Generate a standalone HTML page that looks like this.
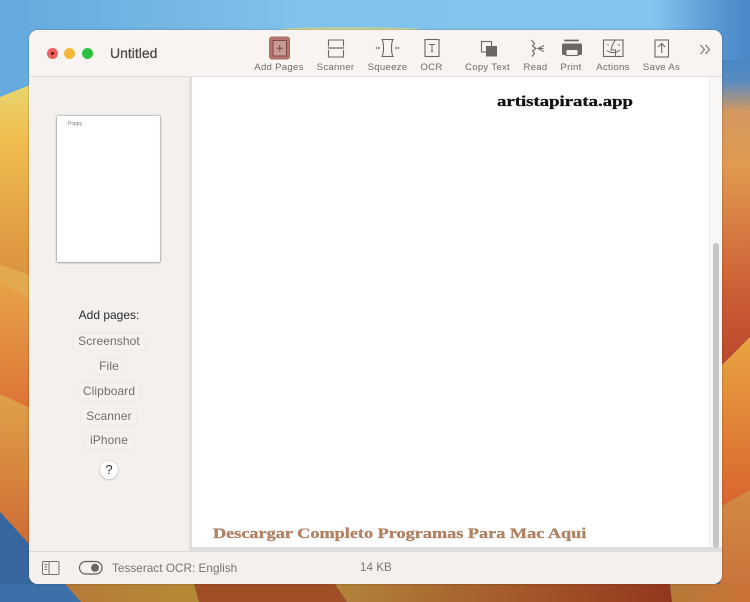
<!DOCTYPE html>
<html>
<head>
<meta charset="utf-8">
<style>
html,body{margin:0;padding:0;width:750px;height:602px;overflow:hidden;background:#5a9ad5}
body{position:relative;font-family:"Liberation Sans",sans-serif}
#bg{position:absolute;left:0;top:0}
.win{position:absolute;left:29px;top:30px;width:693px;height:554px;border-radius:9px;background:#f3f0ed;overflow:hidden;box-shadow:0 0 2px rgba(60,40,30,.4)}
.abs{position:absolute}
.tb{position:absolute;left:0;top:0;width:693px;height:46px;background:#f9f4f1;border-bottom:1px solid #e2dedb}
.lb{position:absolute;top:62px;font-size:9.6px;letter-spacing:.28px;color:#6e6b69;white-space:nowrap;transform:translateX(-50%);line-height:11px}
.t{position:absolute;white-space:nowrap}
.btn{position:absolute;left:50%;transform:translateX(-50%);white-space:nowrap;font-size:12px;letter-spacing:.1px;color:#716e6c;background:#f4f1ef;border:1px solid #eeebe8;border-radius:4px;padding:0 5px;height:16px;line-height:15px}
.ser{font-family:'Liberation Serif',serif;font-weight:bold;transform-origin:0 50%}
</style>
</head>
<body>
<svg id="bg" width="750" height="602" viewBox="0 0 750 602">
<defs>
<linearGradient id="sky" x1="0" y1="0" x2="1" y2="0"><stop offset="0" stop-color="#64a9df"/><stop offset=".4" stop-color="#80c2ea"/><stop offset=".87" stop-color="#82c5ef"/><stop offset=".97" stop-color="#5391cf"/><stop offset="1" stop-color="#4a87c6"/></linearGradient>
<linearGradient id="l1" x1="0" y1="0" x2="0" y2="1"><stop offset="0" stop-color="#e8d76e"/><stop offset=".25" stop-color="#f0bd50"/><stop offset="1" stop-color="#d98a3c"/></linearGradient>
<linearGradient id="l2" x1="0" y1="0" x2="0" y2="1"><stop offset="0" stop-color="#e8a448"/><stop offset="1" stop-color="#dc7034"/></linearGradient>
<linearGradient id="l3" x1="0" y1="0" x2="0" y2="1"><stop offset="0" stop-color="#dfa148"/><stop offset="1" stop-color="#cf6c36"/></linearGradient>
<linearGradient id="r1" gradientUnits="userSpaceOnUse" x1="0" y1="60" x2="0" y2="367"><stop offset="0" stop-color="#4a87c6"/><stop offset=".07" stop-color="#5a8cc0"/><stop offset=".17" stop-color="#d5985f"/><stop offset=".35" stop-color="#e09a50"/><stop offset=".72" stop-color="#cf6238"/><stop offset="1" stop-color="#b9472a"/></linearGradient>
<linearGradient id="r2" x1="0" y1="0" x2="0" y2="1"><stop offset="0" stop-color="#e9a442"/><stop offset="1" stop-color="#d9642e"/></linearGradient>
<linearGradient id="r3" x1="0" y1="0" x2="0" y2="1"><stop offset="0" stop-color="#d28a44"/><stop offset="1" stop-color="#c8703a"/></linearGradient>
<linearGradient id="b1" x1="0" y1="0" x2="1" y2="0"><stop offset="0" stop-color="#b57a38"/><stop offset="1" stop-color="#b58a36"/></linearGradient>
<linearGradient id="b2" x1="0" y1="0" x2="1" y2="0"><stop offset="0" stop-color="#b2833a"/><stop offset=".6" stop-color="#a35428"/><stop offset="1" stop-color="#91371f"/></linearGradient>
<linearGradient id="b3" x1="0" y1="0" x2="1" y2="0"><stop offset="0" stop-color="#b57a38"/><stop offset="1" stop-color="#cc7238"/></linearGradient>
</defs>
<rect width="750" height="602" fill="#3f6fa8"/>
<rect width="750" height="100" fill="url(#sky)"/>
<polygon points="0,97 30,85 30,300 0,265" fill="url(#l1)"/>
<polygon points="0,265 30,275 30,300 0,285" fill="#e3a94f"/>
<polygon points="0,280 30,300 30,418 0,394" fill="url(#l2)"/>
<polygon points="0,394 30,408 30,545 0,512" fill="url(#l3)"/>
<polygon points="0,512 30,545 60,602 0,602" fill="#38679f"/>
<polygon points="720,60 750,60 750,337 720,367" fill="url(#r1)"/>
<polygon points="720,367 750,337 750,490 720,507" fill="url(#r2)"/>
<polygon points="720,507 750,490 750,602 720,602" fill="url(#r3)"/>
<polygon points="0,584 65,584 81,602 0,602" fill="#3d70aa"/>
<polygon points="65,584 194,584 199,602 81,602" fill="url(#b1)"/>
<polygon points="194,584 335,584 347,602 199,602" fill="#a04e26"/>
<polygon points="335,584 670,584 672,602 347,602" fill="url(#b2)"/>
<polygon points="670,584 750,584 750,602 672,602" fill="url(#b3)"/>
<ellipse cx="350" cy="29" rx="70" ry="1.6" fill="#c8d59a"/>
</svg>

<div class="win">
  <div class="tb"></div>
  <div class="abs" style="left:0;top:47px;width:160px;height:474px;background:#f3f0ed"></div>
  <div class="abs" style="left:160px;top:47px;width:3px;height:474px;background:#e2dfdc"></div>
  <div class="abs" style="left:163px;top:47px;width:517px;height:470px;background:#fff"></div>
  <div class="abs" style="left:163px;top:517px;width:530px;height:4px;background:#dfdedc"></div>
  <div class="abs" style="left:680px;top:47px;width:13px;height:470px;background:#f8f7f6;border-left:1px solid #eceaea;box-sizing:border-box"></div>
  <div class="abs" style="left:684px;top:213px;width:6px;height:305px;background:#c6c6c6;border-radius:3px"></div>
  <div class="abs" style="left:0;top:521px;width:693px;height:33px;background:#f3f0ed;border-top:1px solid #dedbd8;box-sizing:border-box"></div>

  <div class="abs" style="left:17.5px;top:18px;width:11px;height:11px;border-radius:50%;background:#e9605c"></div>
  <div class="abs" style="left:21.5px;top:22px;width:3px;height:3px;border-radius:50%;background:#6d0a08"></div>
  <div class="abs" style="left:35px;top:18px;width:11px;height:11px;border-radius:50%;background:#f4b838"></div>
  <div class="abs" style="left:53px;top:18px;width:11px;height:11px;border-radius:50%;background:#2cc141"></div>
  <div class="t" style="left:81px;top:15px;font-size:14px;line-height:17px;color:#4a4846;-webkit-text-stroke:.25px #4a4846">Untitled</div>

  <!-- thumbnail -->
  <div class="abs" style="left:28px;top:86px;width:103px;height:146px;background:#fff;box-shadow:0 0 2px rgba(0,0,0,.5),0 1px 2px rgba(0,0,0,.15)"></div>
  <div class="t" style="left:39px;top:91px;font-size:5px;line-height:6px;color:#777">Poppy</div>

  <!-- sidebar -->
  <div class="abs" style="left:0;top:0;width:160px;height:0">
    <div class="t" style="left:50%;transform:translateX(-50%);top:278px;font-size:12px;line-height:15px;color:#2a2a2a">Add pages:</div>
    <div class="btn" style="top:303px">Screenshot</div>
    <div class="btn" style="top:328px">File</div>
    <div class="btn" style="top:353px">Clipboard</div>
    <div class="btn" style="top:378px">Scanner</div>
    <div class="btn" style="top:402px">iPhone</div>
    <div class="abs" style="left:71px;top:431px;width:18px;height:18px;border-radius:50%;background:#fff;box-shadow:0 .5px 2px rgba(0,0,0,.3);text-align:center;font-size:13px;line-height:18px;color:#333">?</div>
  </div>

  <!-- toolbar icons -->
  <svg class="abs" style="left:0;top:0" width="693" height="47" viewBox="29 30 693 47" fill="none" stroke="#6a6765" stroke-width="1.1">
    <!-- Add pages -->
    <rect x="269.5" y="37" width="20" height="22" rx="2.5" fill="#b8736f" stroke="#a86d68" stroke-width="1"/>
    <rect x="273" y="40.5" width="13.5" height="15.5" fill="#c99a94" stroke="#7d4a47" stroke-width="1"/>
    <path d="M279.7 45v6.5M276.5 48.3h6.5" stroke="#7d4a47" stroke-width="1"/>
    <!-- Scanner -->
    <path d="M328.5 46.5V40h15v6.5M328.5 50v7h15v-7"/>
    <path d="M328 48h16" stroke-width="1.2"/>
    <!-- Squeeze -->
    <path d="M382 39.5h11c-2 3.5-2 13.5 0 17h-11c2-3.5 2-13.5 0-17z"/>
    <circle cx="376.5" cy="48" r=".9" fill="#6a6765" stroke="none"/>
    <circle cx="398.5" cy="48" r=".9" fill="#6a6765" stroke="none"/>
    <path d="M378.3 46.4l1.8 1.6-1.8 1.6z M396.7 46.4l-1.8 1.6 1.8 1.6z" fill="#6a6765" stroke="none"/>
    <!-- OCR -->
    <rect x="425" y="39.5" width="14" height="17"/>
    <path d="M429 44.5h6M432 44.5v7M431 51.5h2" stroke-width="1"/>
    <!-- Copy text -->
    <rect x="481.5" y="41.5" width="10" height="10.5" fill="#f9f4f1" stroke="#6a6765"/>
    <rect x="486" y="46" width="11" height="10.5" fill="#6a6765" stroke="none"/>
    <!-- Read -->
    <path d="M531.5 40l3 3.5-2 2.5 3.5 2.5-3.5 2.5 2 2.5-2.5 3" stroke-width="1.1"/>
    <path d="M544 45.5l-6 3 6 3M538 48.5h5.5" stroke-width="1"/>
    <!-- Print -->
    <path d="M565 41v-.5h13v.5" stroke-width="1.8"/>
    <rect x="562" y="43.5" width="20" height="11.5" rx="1.5" fill="#6a6765" stroke="none"/>
    <rect x="566" y="49.5" width="12" height="6" fill="#f9f4f1" stroke="#6a6765" stroke-width="1.1"/>
    <!-- Actions -->
    <rect x="603.5" y="40" width="19.5" height="16.5"/>
    <path d="M615 40.5c-2 3-3.5 6-4 9.5h4.5v6.5" stroke-width="1"/>
    <path d="M607.5 44l1 1.5M619 44v2M607 50.5c3 2.5 9 3 13-.5" stroke-width="1"/>
    <!-- Save as -->
    <rect x="655" y="40" width="13.5" height="17"/>
    <path d="M661.7 53v-9.5M658.2 47l3.5-3.5 3.5 3.5" stroke-width="1.1"/>
    <!-- more -->
    <path d="M700.5 45l4 4.5-4 4.5M705.5 45l4 4.5-4 4.5" stroke-width="1"/>
  </svg>
  <div style="position:absolute;left:-29px;top:-30px;width:0;height:0">
    <div class="lb" style="left:279px">Add Pages</div>
    <div class="lb" style="left:335.5px">Scanner</div>
    <div class="lb" style="left:387.5px">Squeeze</div>
    <div class="lb" style="left:431.5px">OCR</div>
    <div class="lb" style="left:487.5px">Copy Text</div>
    <div class="lb" style="left:535.5px">Read</div>
    <div class="lb" style="left:571px">Print</div>
    <div class="lb" style="left:613px">Actions</div>
    <div class="lb" style="left:661.5px">Save As</div>
    <div class="t ser" style="left:497px;top:94px;font-size:15px;line-height:17px;color:#111;-webkit-text-stroke:.3px #111;transform:scaleX(1.25)">artistapirata.app</div>
    <div class="t ser" style="left:213px;top:525px;font-size:15px;line-height:18px;color:#b18162;-webkit-text-stroke:.3px #b18162;transform:scaleX(1.215)">Descargar Completo Programas Para Mac Aqui</div>
    <div class="t" style="left:112px;top:561px;font-size:11.8px;line-height:15px;color:#777472">Tesseract OCR: English</div>
    <div class="t" style="left:360px;top:561px;font-size:11.5px;line-height:15px;letter-spacing:.1px;color:#777472">14 KB</div>
  </div>

  <!-- status icons -->
  <svg class="abs" style="left:0;top:521px" width="120" height="33" viewBox="29 551 120 33" fill="none">
    <rect x="42.5" y="561.5" width="16.5" height="13" rx="1.5" stroke="#757270" stroke-width="1"/>
    <path d="M49 561.5v13" stroke="#757270" stroke-width="1"/>
    <path d="M44.5 564.5h2.5M44.5 567h2.5M44.5 569.5h2.5" stroke="#757270" stroke-width=".9"/>
    <rect x="79.5" y="561.5" width="22.5" height="12.5" rx="6.2" stroke="#62605e" stroke-width="1.2"/>
    <circle cx="95" cy="567.8" r="4" fill="#6a6866"/>
  </svg>
</div>
</body>
</html>
